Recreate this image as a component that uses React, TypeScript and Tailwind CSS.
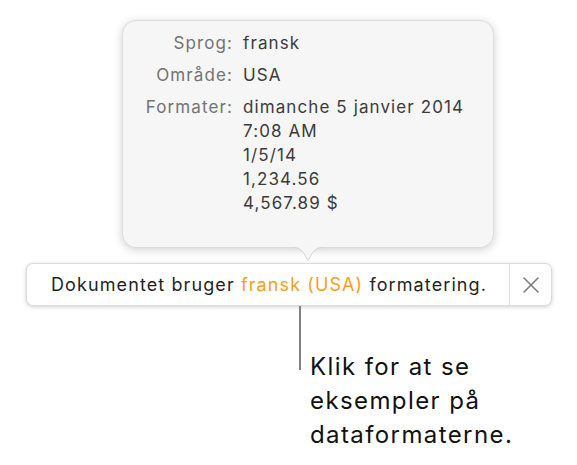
import React from 'react';

const rows: { label: string; values: string[] }[] = [
  { label: 'Sprog:', values: ['fransk'] },
  { label: 'Område:', values: ['USA'] },
  { label: 'Formater:', values: ['dimanche 5 janvier 2014', '7:08 AM', '1/5/14', '1,234.56', '4,567.89 $'] },
];

function Popover() {
  return (
    <div className="relative ml-[122px] w-[372px] h-[228px] rounded-[14px] bg-[#f6f6f6] border border-[#dcdcdc] shadow-[0_2px_10px_rgba(0,0,0,0.18)]">
      <div className="grid grid-cols-[110px_1fr] gap-x-[10px] gap-y-[8px] pt-[10px] text-[17px] leading-[24px] tracking-[1.1px]">
        {rows.map((r) => (
          <React.Fragment key={r.label}>
            <div className="text-right text-[#737373]">{r.label}</div>
            <div className="text-[#3b3b3b]">
              {r.values.map((v) => (
                <div key={v}>{v}</div>
              ))}
            </div>
          </React.Fragment>
        ))}
      </div>
      {/* arrow */}
      <svg className="absolute left-[169px] top-[226px]" width="32" height="16" viewBox="0 0 32 16">
        <path d="M0 0 C7 0 9 2 12 6 L16 13 L20 6 C23 2 25 0 32 0 Z" fill="#f6f6f6" />
        <path d="M0 0.5 C7 0.5 9 2.5 12 6.5 L16 13.5 L20 6.5 C23 2.5 25 0.5 32 0.5" fill="none" stroke="#d6d6d6" strokeWidth="1" />
      </svg>
    </div>
  );
}

export default function App() {
  return (
    <div className="w-[577px] h-[465px] bg-white pt-[20px] font-['Inter','Roboto',sans-serif] overflow-hidden">
      <Popover />
      <div className="ml-[26px] mt-[15px] w-[526px] h-[43px] flex items-stretch rounded-[7px] bg-white border border-[#dadada] shadow-[0_1px_4px_rgba(0,0,0,0.18)]">
        <div className="flex-1 flex items-center justify-center pl-[2px] text-[18px] tracking-[1.1px] text-[#1f1f1f]">
          <span>
            Dokumentet bruger <span className="text-[#f5a01a]">fransk (USA)</span> formatering.
          </span>
        </div>
        <div className="w-[42px] border-l border-[#e2e2e2] flex items-center justify-center">
          <svg width="16" height="16" viewBox="0 0 16 16">
            <path d="M1 1 L15 15 M15 1 L1 15" stroke="#7d7d7d" strokeWidth="1.6" strokeLinecap="round" />
          </svg>
        </div>
      </div>
      <div className="ml-[299px] flex">
        <div className="w-[2px] h-[64px] bg-[#808080]" />
        <div className="ml-[9px] mt-[44px] text-[24px] leading-[34px] tracking-[1.4px] text-[#111]">
          <div>Klik for at se</div>
          <div>eksempler på</div>
          <div>dataformaterne.</div>
        </div>
      </div>
    </div>
  );
}
